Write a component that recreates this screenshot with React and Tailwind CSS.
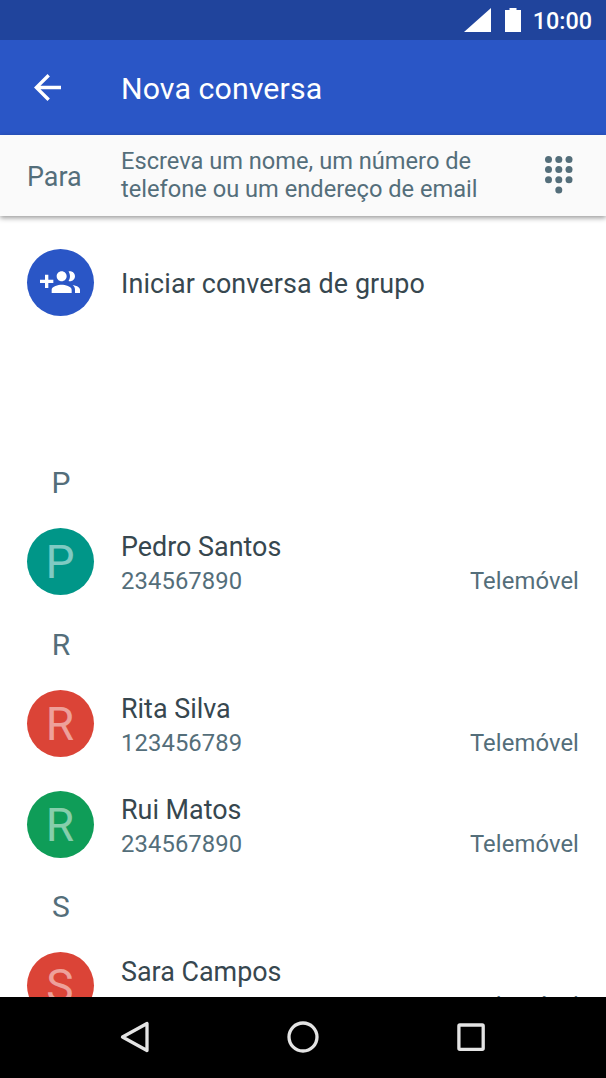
import React from "react";

function Avatar({ letter, color }) {
  return (
    <div className={"flex h-[67px] w-[67px] shrink-0 items-center justify-center rounded-full " + color}>
      <span className="mr-[1px] pt-[1px] text-[46px] leading-none text-white/50">{letter}</span>
    </div>
  );
}

function Contact({ name, number, color }) {
  return (
    <li className="flex h-[101px] shrink-0 items-center pl-[27px] pr-[27px]">
      <Avatar letter={name[0]} color={color} />
      <div className="ml-[27px] flex-1 pt-[6px]">
        <div className="text-[26.9px] leading-[34px] text-[#37474f]">{name}</div>
        <div className="flex justify-between text-[23.8px] leading-[34px] tracking-[0.1px] text-[#546e7a]">
          <span>{number}</span>
          <span>Telemóvel</span>
        </div>
      </div>
    </li>
  );
}

function Section({ letter, children }) {
  return (
    <section>
      <h2 className="flex h-[60.8px] w-[122px] items-center justify-center pt-[5px] text-[30px] leading-none text-[#546e7a]">{letter}</h2>
      <ul>{children}</ul>
    </section>
  );
}

export default function App() {
  return (
    <div className="flex h-[1078px] w-[606px] flex-col overflow-hidden bg-white font-['Roboto',sans-serif]">
      <div className="flex h-[40px] shrink-0 items-center justify-end bg-[#20449c] pr-[14px] text-white">
        <svg className="h-[24px] w-[27px]" viewBox="0 0 27 24" fill="currentColor"><path d="M27 0V24H0z" /></svg>
        <svg className="ml-[14px] h-[24px] w-[16px]" viewBox="0 0 16 24" fill="currentColor"><path d="M4.500 0h7v2H16v22H0V2h4.500z" /></svg>
        <span className="ml-[12px] pt-[4px] text-[23.400px] font-medium leading-none">10:00</span>
      </div>
      <header className="flex h-[95px] shrink-0 items-center bg-[#2a56c6] pl-[34px] text-white">
        <svg className="h-[27px] w-[27px]" viewBox="4 4 16 16" fill="currentColor"><path d="M20 11H7.830l5.590-5.590L12 4l-8 8 8 8 1.410-1.410L7.830 13H20z" /></svg>
        <h1 className="ml-[60px] pt-[4px] text-[30.3px] leading-none tracking-[0.1px]">Nova conversa</h1>
      </header>
      <div className="z-10 flex h-[81px] shrink-0 items-center bg-[#fafafa] pl-[27px] text-[#546e7a] shadow-[0_2px_5px_rgba(0,0,0,0.4)]">
        <span className="w-[94px] pt-[3px] text-[26.9px] leading-none">Para</span>
        <p className="w-[424px] pb-[1.500px] text-[23.65px] leading-[28px]">Escreva um nome, um número de<br />telefone ou um endereço de email</p>
        <svg className="mb-[2px] h-[38px] w-[28px]" viewBox="0 0 28 38" fill="currentColor">
          {[3.5, 13.6, 23.8].map((y) => [3.5, 13.8, 24].map((x) => <circle key={x + "-" + y} cx={x} cy={y} r="3.5" />))}
          <circle cx="13.8" cy="34" r="3.5" />
        </svg>
      </div>
      <main className="min-h-0 flex-1 overflow-hidden">
        <div className="flex h-[234px] items-start pl-[27px] pt-[33.4px]">
          <div className="flex h-[67px] w-[67px] items-center justify-center rounded-full bg-[#2a56c6]">
            <svg className="mr-[1px] h-[40px] w-[40px]" viewBox="0 0 24 24" fill="#fff">
              <path d="M8 10H5V7H3v3H0v2h3v3h2v-3h3v-2zm10 1c1.660 0 2.990-1.340 2.990-3S19.660 5 18 5c-.32 0-.63.050-.91.140.57.810.9 1.790.9 2.860s-.34 2.040-.9 2.860c.28.090.59.140.91.140zm-5 0c1.660 0 2.990-1.340 2.990-3S14.660 5 13 5c-1.660 0-3 1.340-3 3s1.340 3 3 3zm6.620 2.160c.83.730 1.380 1.660 1.380 2.840v2h3v-2c0-1.540-2.370-2.490-4.380-2.840zM13 13c-2 0-6 1-6 3v2h12v-2c0-2-4-3-6-3z" />
            </svg>
          </div>
          <span className="ml-[27px] pt-[1.6px] text-[26.9px] leading-[67px] tracking-[0.12px] text-[#37474f]">Iniciar conversa de grupo</span>
        </div>
        <Section letter="P">
          <Contact name="Pedro Santos" number="234567890" color="bg-[#009688]" />
        </Section>
        <Section letter="R">
          <Contact name="Rita Silva" number="123456789" color="bg-[#db4437]" />
          <Contact name="Rui Matos" number="234567890" color="bg-[#0f9d58]" />
        </Section>
        <Section letter="S">
          <Contact name="Sara Campos" number="234567890" color="bg-[#db4437]" />
        </Section>
      </main>
      <nav className="flex h-[81px] shrink-0 items-center justify-center gap-[136px] bg-black pb-[1px] text-[#e4e4e4]">
        <svg className="h-[32px] w-[32px]" viewBox="0 0 32 32" fill="none" stroke="currentColor" strokeWidth="3.300" strokeLinejoin="round"><path d="M28 2.500v27L3.500 16z" /></svg>
        <svg className="h-[32px] w-[32px]" viewBox="0 0 32 32" fill="none" stroke="currentColor" strokeWidth="3.300"><circle cx="16" cy="16" r="14" /></svg>
        <svg className="h-[32px] w-[32px]" viewBox="0 0 32 32" fill="none" stroke="currentColor" strokeWidth="3.300"><rect x="3.900" y="4" width="24.300" height="24.300" rx="1" /></svg>
      </nav>
    </div>
  );
}
